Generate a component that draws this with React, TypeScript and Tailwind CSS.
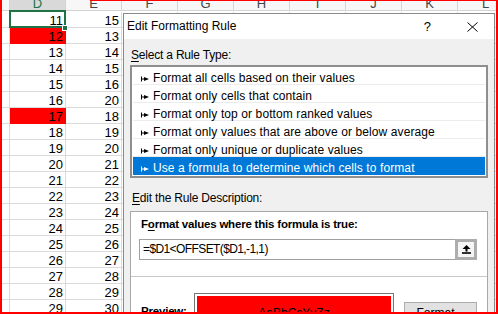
import React from "react"

const colLetters = ["", "D", "E", "F", "G", "H", "I", "J", "K", "L"]
const eValues = [15, 13, 14, 15, 16, 20, 18, 19, 20, 21, 22, 23, 24, 25, 26, 27, 28, 29, 30]
const rules = [
  "Format all cells based on their values",
  "Format only cells that contain",
  "Format only top or bottom ranked values",
  "Format only values that are above or below average",
  "Format only unique or duplicate values",
  "Use a formula to determine which cells to format",
]

const RuleArrow = ({ color }: { color: string }) => (
  <svg width="8" height="6" viewBox="0 0 8 6" className="shrink-0">
    <rect x="0" y="0.5" width="1" height="5" fill={color} />
    <rect x="0" y="2.5" width="4" height="1" fill={color} />
    <polygon points="3,1 8,3 3,5" fill={color} />
  </svg>
)

const Sheet = () => (
  <div className="flex flex-col font-['Liberation_Sans',Arial,sans-serif] text-[13px] text-black">
    {/* column headers */}
    <div className="flex h-[11px] shrink-0">
      {colLetters.map((l, i) => (
        <div
          key={i}
          className={`flex items-end justify-center overflow-hidden border-r border-b border-[#d4d4d4] leading-[13px] shrink-0 ${
            i === 0 ? "w-[10px] bg-[#f3f3f3]" : "w-[56px]"
          } ${l === "D" ? "bg-[#d9d9d9] text-[#217346]" : "bg-[#f7f7f7] text-[#444]"}`}
        >
          {l}
        </div>
      ))}
    </div>
    {eValues.map((e, r) => {
      const d = r + 11
      const red = d === 12 || d === 17
      return (
        <div key={d} className={`flex shrink-0 ${r === 0 ? "h-[17px] pt-px" : "h-[16px]"}`}>
          {colLetters.map((_, i) => (
            <div
              key={i}
              className={`flex items-start justify-end pt-px pr-[2px] leading-[15px] border-r border-b shrink-0 ${
                i === 0 ? "w-[10px]" : "w-[56px]"
              } ${i === 1 && red ? "bg-[#ff0000] border-[#ff0000]" : "border-[#dadada]"}`}
            >
              {i === 1 ? d : i === 2 ? e : ""}
            </div>
          ))}
        </div>
      )
    })}
  </div>
)

const Dialog = () => (
  <div className="absolute left-[123px] top-[13px] w-[372px] h-[320px] border border-[#8a8a8a] bg-[#f0f0f0] font-['Liberation_Sans',Arial,sans-serif] text-[12px] leading-[15px] text-black flex flex-col">
    {/* title bar */}
    <div className="h-[25px] bg-white flex items-start pt-[5px] pl-[3px] pr-[16px] shrink-0">
      <span>Edit Formatting Rule</span>
      <span className="ml-auto text-[13px]">?</span>
      <svg width="11" height="10" viewBox="0 0 11 10" className="ml-[36px] mt-[3px]">
        <path d="M0.5 0.5 L10.5 9.5 M10.5 0.5 L0.5 9.5" stroke="#000" strokeWidth="1" />
      </svg>
    </div>

    <div className="flex flex-col pl-[6px] pr-[6px]">
      <div className="pt-[9px] pl-px mb-[2px] tracking-[-0.2px]">
        <span className="underline underline-offset-2">S</span>elect a Rule Type:
      </div>

      <div className="border-2 border-[#8e8e8e] bg-white px-px pb-px flex flex-col">
        {rules.map((r, i) => {
          const sel = i === rules.length - 1
          return (
            <div
              key={r}
              className={`h-[18px] pt-[4px] ${
                sel ? "bg-[#0078d7] text-white" : "border-b border-[#ececec]"
              }`}
            >
              <div className="flex items-center h-[15px] pl-[8px] gap-[4px]">
                <RuleArrow color={sel ? "#ffffff" : "#000000"} />
                <span className="whitespace-nowrap tracking-[0.1px]">{r}</span>
              </div>
            </div>
          )
        })}
      </div>

      <div className="mt-[13px] pl-[2px] mb-[5px] tracking-[-0.2px]">
        <span className="underline underline-offset-2">E</span>dit the Rule Description:
      </div>

      <div className="border border-[#a8a8a8] bg-white flex flex-col h-[200px]">
        <div className="pt-[5px] pl-[10px] font-bold text-[11.5px] tracking-[-0.2px]">
          F<span className="underline underline-offset-2">o</span>rmat values where this formula is true:
        </div>
        <div className="mt-[7px] ml-[8px] mr-[10px] h-[21px] flex border border-[#a0a0a0]">
          <div className="flex-1 flex items-center pl-[3px] whitespace-nowrap tracking-[-0.6px]">=$D1&lt;OFFSET($D1,-1,1)</div>
          <div className="w-[22px] h-[21px] -mt-px -mr-px border-[3px] border-[#adadad] bg-[#f5f5f5] flex items-center justify-center">
            <svg width="9" height="9" viewBox="0 0 9 9">
              <polygon points="4.5,0 0.5,4 3.5,4 3.5,6.5 5.5,6.5 5.5,4 8.5,4" fill="#000" />
              <rect x="0" y="7.2" width="9" height="1.6" fill="#000" />
            </svg>
          </div>
        </div>
        <div className="mt-[16px] border-t border-[#c8c8c8]" />
        <div className="flex items-start pl-[10px] mt-[16px]">
          <div className="w-[53px] mt-[11px] font-bold text-[11.5px] tracking-[-0.2px]">Preview:</div>
          <div className="w-[200px] border border-[#777] p-[2px]">
            <div className="h-[34px] bg-[#ff0000] flex items-start justify-center pt-[10px] text-[12px]">AaBbCcYyZz</div>
          </div>
          <div className="ml-[10px] mt-[9px] w-[73px] h-[23px] bg-[#e1e1e1] border border-[#adadad] flex items-center justify-center">
            Format...
          </div>
        </div>
      </div>
    </div>
  </div>
)

export default function App() {
  return (
    <div className="relative w-[498px] h-[314px] overflow-hidden bg-white">
      <Sheet />
      {/* active cell D11 */}
      <div className="absolute left-[9px] top-[10px] w-[57px] h-[18px] border-2 border-[#217346]" />
      <div className="absolute left-[62px] top-[25px] w-[6px] h-[6px] bg-[#217346] border border-white" />
      <Dialog />
      {/* red frame */}
      <div className="absolute inset-0 border-l-2 border-r-2 border-b-2 border-[#ff0000] pointer-events-none" />
      <div className="absolute top-0 left-[90px] right-0 h-px bg-[#ff0000]" />
    </div>
  )
}
